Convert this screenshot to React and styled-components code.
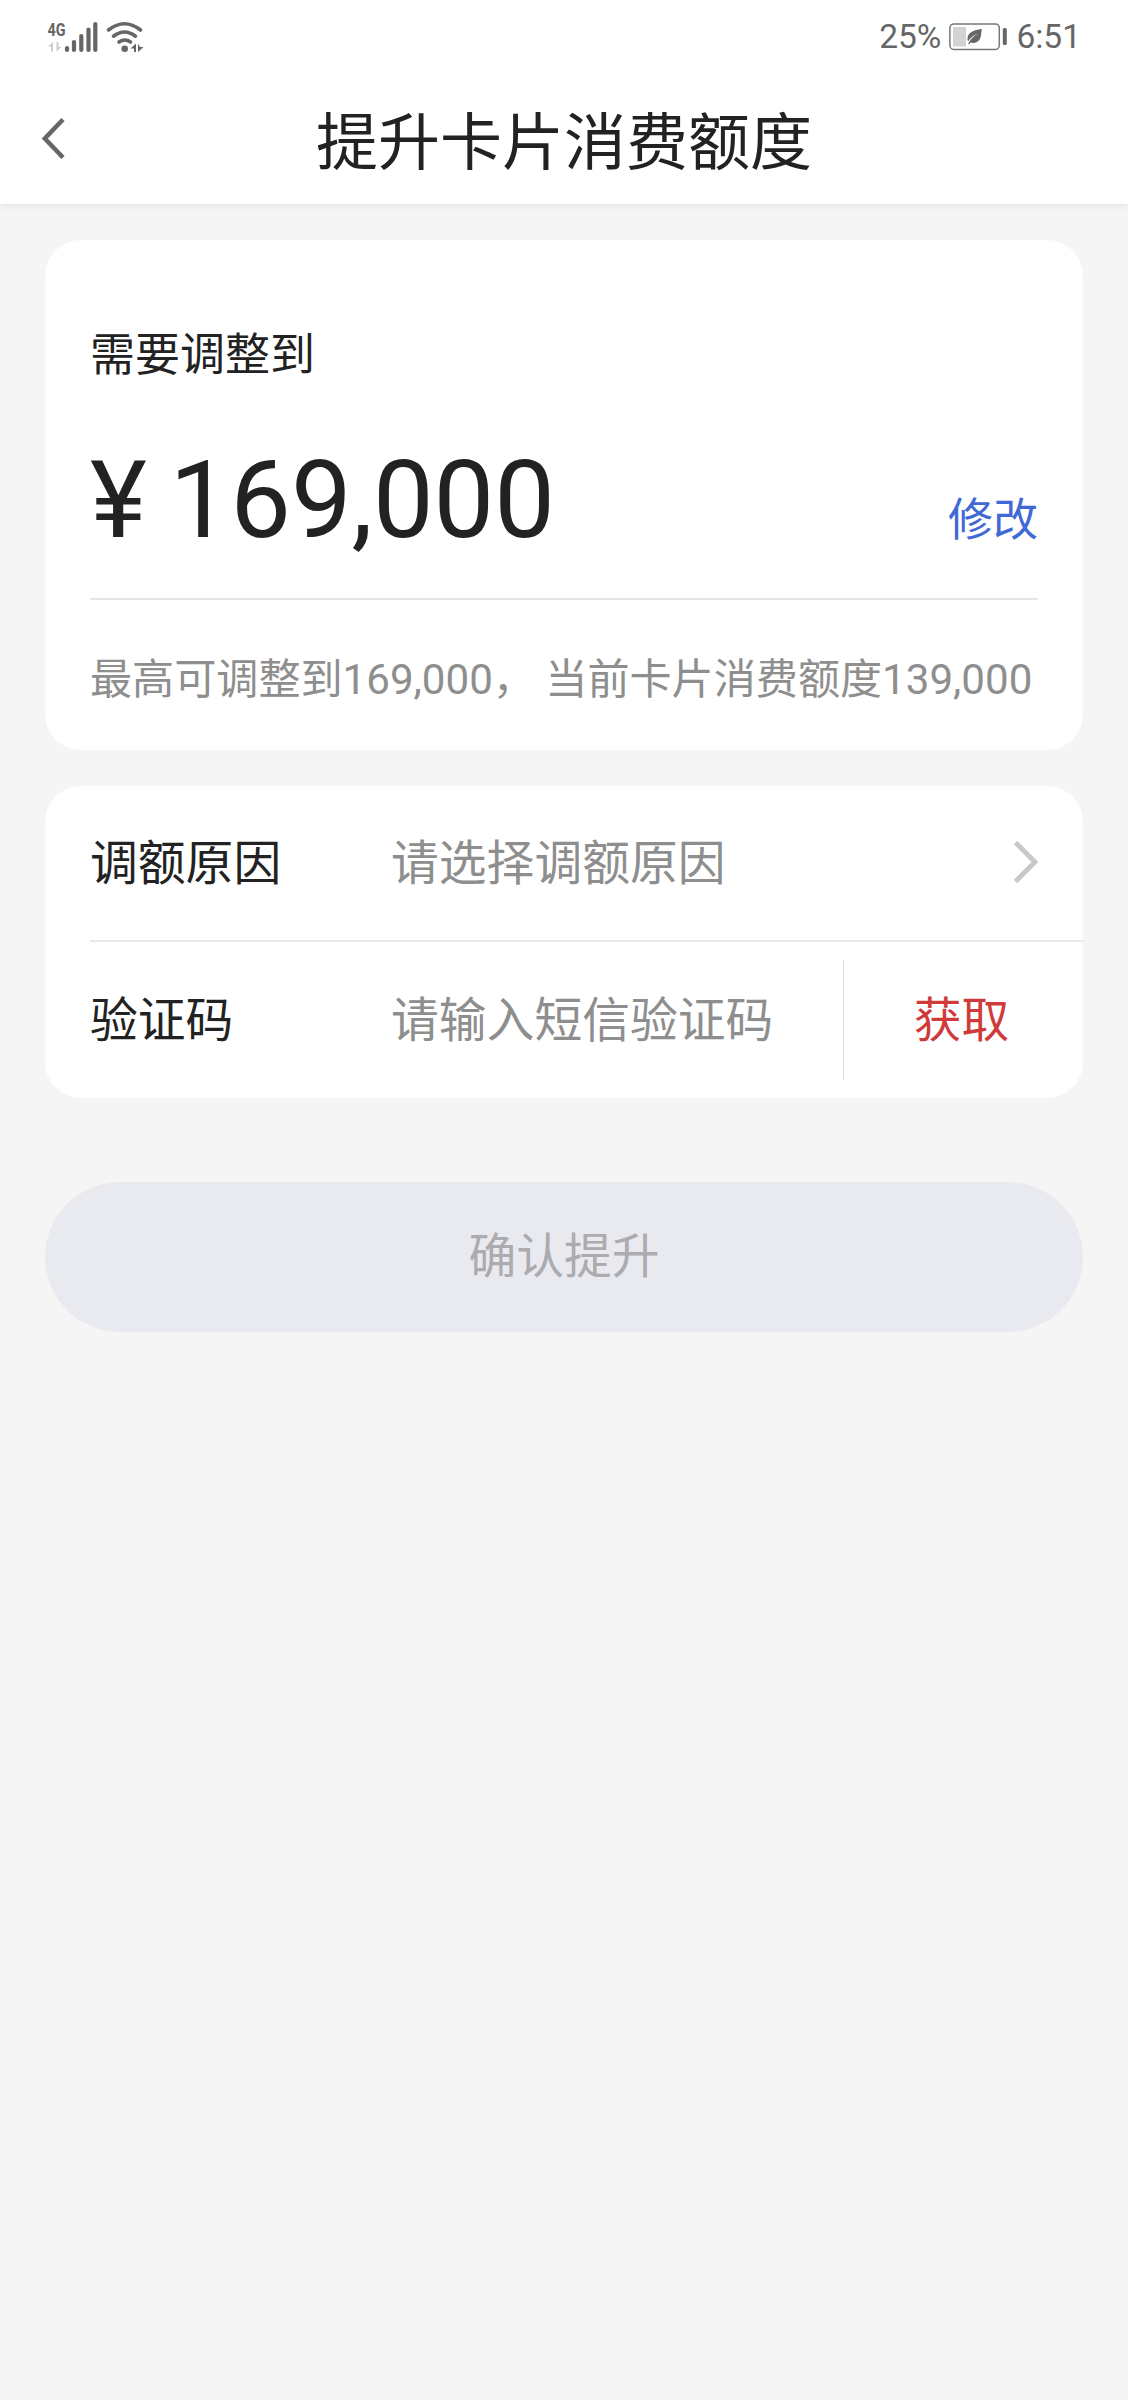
import React from "react";
import styled, { createGlobalStyle } from "styled-components";

const GlobalStyle = createGlobalStyle`
  *, *::before, *::after { box-sizing: border-box; }
  body {
    margin: 0;
    background: #f5f5f5;
    font-family: Roboto, "Noto Sans CJK SC", sans-serif;
    color: #222;
  }
  button {
    margin: 0;
    padding: 0;
    border: 0;
    background: none;
    font: inherit;
    color: inherit;
  }
`;

const Screen = styled.div`
  width: 1128px;
  height: 2400px;
  background: #f5f5f5;
`;

const TopArea = styled.header`
  height: 204px;
  background: #fff;
  box-shadow: 0 2px 6px rgba(0, 0, 0, 0.07);
`;

const StatusBar = styled.div`
  display: flex;
  justify-content: space-between;
  align-items: center;
  height: 72px;
  padding: 2px 47px 0 45px;
  color: #666;
`;

const StatusGroup = styled.div`
  display: flex;
  align-items: center;
  gap: ${(p) => p.$gap}px;
`;

const StatusText = styled.span`
  font-size: 33.5px;
  line-height: 40px;
`;

const TitleBar = styled.div`
  display: grid;
  grid-template-columns: 120px 1fr 120px;
  align-items: center;
  height: 132px;
`;

const BackButton = styled.button`
  display: flex;
  height: 132px;
  padding: 45px 0 0 41px;
`;

const PageTitle = styled.h1`
  margin: 0;
  padding-top: 12px;
  text-align: center;
  font-size: 62px;
  line-height: 72px;
  font-weight: 400;
`;

const Content = styled.main`
  display: flex;
  flex-direction: column;
  gap: 36px;
  padding: 36px 45px 0;
`;

const Card = styled.section`
  border-radius: 36px;
  background: #fff;
`;

const AmountCard = styled(Card)`
  height: 510px;
  padding: 86px 45px 0;
`;

const AmountLabel = styled.div`
  font-size: 45px;
  line-height: 60px;
`;

const AmountRow = styled.div`
  display: flex;
  justify-content: space-between;
  align-items: flex-end;
  margin-top: 51px;
  padding-bottom: 35px;
  border-bottom: 2px solid #e6e6e6;
`;

const Amount = styled.div`
  font-size: 108px;
  line-height: 126px;
  word-spacing: -4px;
`;

const EditLink = styled.button`
  margin-bottom: 12px;
  font-size: 45px;
  line-height: 60px;
  color: #4169d6;
`;

const Hint = styled.p`
  display: flex;
  align-items: center;
  height: 150px;
  margin: 0;
  padding-top: 9px;
  font-size: 42.1px;
  line-height: 60px;
  white-space: nowrap;
  color: #8e8e8e;
`;

const FormCard = styled(Card)`
  height: 312px;
  padding-left: 45px;
`;

const FormRow = styled.div`
  display: flex;
  align-items: center;
  height: ${(p) => p.$height}px;
  font-size: 47.8px;
  line-height: 60px;
  border-bottom: ${(p) => (p.$divided ? "2px solid #e8e8e8" : "0")};
`;

const FieldLabel = styled.span`
  width: 301px;
  padding-top: 2px;
`;

const FieldValue = styled.span`
  flex: 1;
  padding-top: 2px;
  color: #8e8e8e;
`;

const ChevronSlot = styled.span`
  display: flex;
  padding-right: 44px;
`;

const CodeButton = styled.button`
  width: 240px;
  height: 120px;
  padding: 2px 4px 0 0;
  border-left: 1px solid #dedede;
  text-align: center;
  color: #cf3a3a;
`;

const SubmitButton = styled.button`
  height: 150px;
  margin-top: 48px;
  padding-bottom: 1px;
  border-radius: 75px;
  background: #e9eaef;
  font-size: 47.8px;
  line-height: 60px;
  color: #ababb0;
`;

function SignalIcon() {
  return (
    <svg width="53" height="42" viewBox="45 15 53 42" fill="#666">
      <text
        x="47.5"
        y="35"
        fontSize="19"
        fontWeight="700"
        fontFamily="Roboto, sans-serif"
        textLength="18"
        lengthAdjust="spacingAndGlyphs"
      >
        4G
      </text>
      <path d="M48 45.500 53 41v9.500h-2v-5zM56.500 41v9.500l5-4.500h-3v-5z" fill="#ccc" />
      <g stroke="#666" strokeWidth="4.200" strokeLinecap="round">
        <path d="M67 47v2M74 41v8M81.300 35v14M88.500 28.500v20.500M95.300 23v26" />
      </g>
    </svg>
  );
}

function WifiIcon() {
  return (
    <svg width="40" height="34" viewBox="105 19 40 34" fill="none">
      <g stroke="#666" strokeWidth="3.600" strokeLinecap="round">
        <path d="M108.500 29Q124.500 16.500 140.500 29" />
        <path d="M113.500 35.200Q124.500 26.800 135.500 35.200" />
        <path d="M119 41Q124.700 37 130.500 41" />
      </g>
      <circle cx="124.700" cy="47.700" r="3.300" fill="#666" />
      <path d="M130.500 47.500 136 42.500v8.500h-2v-3.500zM138 42.500v8.500l5.500-5h-3.500z" fill="#666" />
    </svg>
  );
}

function BatteryIcon() {
  return (
    <svg width="59" height="28" viewBox="949 23 59 28">
      <rect x="949.900" y="23.900" width="49.400" height="25.600" rx="4" fill="#fff" stroke="#777" strokeWidth="1.500" />
      <rect x="953" y="27" width="13" height="19.500" fill="#d3d3d3" />
      <path
        d="M982 29c-5 .7-14.500 2-14.500 9.500 0 1 .2 2 .5 2.700 3.500-4.500 6-6 9.500-7.500-4 2.500-7.300 5.600-9.500 10.300l1.200.2 1.200-1.600c7 1.600 10.100-2.600 10.600-7.600.2-2.500.5-4.500 1-6z"
        fill="#666"
      />
      <rect x="1002.800" y="28" width="4" height="17" rx="1.500" fill="#666" />
    </svg>
  );
}

function BackIcon() {
  return (
    <svg width="26" height="44" viewBox="0 0 26 44" fill="none" stroke="#666" strokeWidth="4.500">
      <path d="M22 2.500 3.800 21.500 22 40.500" />
    </svg>
  );
}

function ChevronIcon() {
  return (
    <svg width="26" height="44" viewBox="0 0 26 44" fill="none" stroke="#c8c8c8" strokeWidth="4.800">
      <path d="M2.500 1.500 22 21 2.500 40.500" />
    </svg>
  );
}

export default function App() {
  return (
    <Screen>
      <GlobalStyle />
      <TopArea>
        <StatusBar>
          <StatusGroup $gap={7}>
            <SignalIcon />
            <WifiIcon />
          </StatusGroup>
          <StatusGroup $gap={8}>
            <StatusText>25%</StatusText>
            <BatteryIcon />
            <StatusText>6:51</StatusText>
          </StatusGroup>
        </StatusBar>
        <TitleBar>
          <BackButton aria-label="返回">
            <BackIcon />
          </BackButton>
          <PageTitle>提升卡片消费额度</PageTitle>
        </TitleBar>
      </TopArea>
      <Content>
        <AmountCard>
          <AmountLabel>需要调整到</AmountLabel>
          <AmountRow>
            <Amount>¥ 169,000</Amount>
            <EditLink>修改</EditLink>
          </AmountRow>
          <Hint>最高可调整到169,000， 当前卡片消费额度139,000</Hint>
        </AmountCard>
        <FormCard>
          <FormRow $height={156} $divided>
            <FieldLabel>调额原因</FieldLabel>
            <FieldValue>请选择调额原因</FieldValue>
            <ChevronSlot>
              <ChevronIcon />
            </ChevronSlot>
          </FormRow>
          <FormRow $height={156}>
            <FieldLabel>验证码</FieldLabel>
            <FieldValue>请输入短信验证码</FieldValue>
            <CodeButton>获取</CodeButton>
          </FormRow>
        </FormCard>
        <SubmitButton>确认提升</SubmitButton>
      </Content>
    </Screen>
  );
}
